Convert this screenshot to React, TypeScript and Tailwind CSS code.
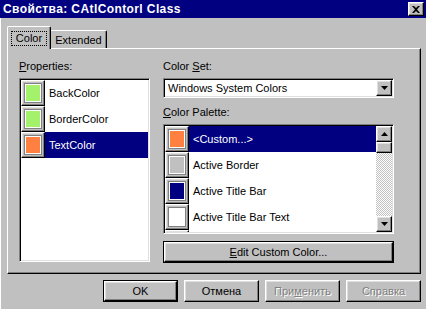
// Win95-style property page: "Свойства: CAtlContorl Class"

const raised = 'border border-t-white border-l-white border-r-black border-b-black shadow-[inset_-1px_-1px_#808080,inset_1px_1px_#dfdfdf]'
const sunken = 'border border-t-[#808080] border-l-[#808080] border-r-white border-b-white shadow-[inset_1px_1px_#000,inset_-1px_-1px_#dfdfdf]'
const disabledText = 'text-[#808080] [text-shadow:1px_1px_0_#fff]'

interface Item { name: string; color: string }

const props: Item[] = [
  { name: 'BackColor', color: '#a4f26c' },
  { name: 'BorderColor', color: '#a4f26c' },
  { name: 'TextColor', color: '#ff8040' },
]

const palette: Item[] = [
  { name: '<Custom...>', color: '#ff8040' },
  { name: 'Active Border', color: '#c0c0c0' },
  { name: 'Active Title Bar', color: '#000080' },
  { name: 'Active Title Bar Text', color: '#ffffff' },
  { name: 'Active Window Border', color: '#c0c0c0' },
]

function Arrow({ up = false }: { up?: boolean }) {
  return (
    <svg width="7" height="4" viewBox="0 0 7 4" className="block">
      <polygon points={up ? '3.5,0 7,4 0,4' : '0,0 7,0 3.5,4'} fill="#000" />
    </svg>
  )
}

function Swatch({ color }: { color: string }) {
  return (
    <div className={`shrink-0 w-[24px] h-[26px] bg-[#c0c0c0] flex items-center justify-center ${raised}`}>
      <div className="w-[18px] h-[20px] border border-[#808080] bg-white p-[1px]">
        <div className="w-full h-full" style={{ backgroundColor: color }} />
      </div>
    </div>
  )
}

function Row({ item, selected }: { item: Item; selected?: boolean }) {
  return (
    <div className="flex h-[26px] shrink-0">
      <Swatch color={item.color} />
      <div className={`flex-1 flex items-center pl-[4px] whitespace-nowrap ${selected ? 'bg-[#000080] text-white' : ''}`}>{item.name}</div>
    </div>
  )
}

function Btn({ children, def, disabled, className = '' }: { children: React.ReactNode; def?: boolean; disabled?: boolean; className?: string }) {
  const inner = (
    <div className={`w-full h-full bg-[#c0c0c0] flex items-center justify-center whitespace-nowrap ${raised} ${disabled ? disabledText : ''}`}>{children}</div>
  )
  return def ? (
    <div className={`border border-black ${className}`}>{inner}</div>
  ) : (
    <div className={className}>{inner}</div>
  )
}

export default function App() {
  return (
    <div className="w-[426px] h-[309px] bg-[#c0c0c0] flex flex-col overflow-hidden text-[11px] leading-[13px] text-black font-['Liberation_Sans',Arial,sans-serif]">
      {/* Title bar */}
      <div className="shrink-0 h-[18px] bg-[#000080] flex items-center pl-[3px] pr-[2px]">
        <span className="flex-1 text-white font-bold text-[12px] tracking-[0.4px] whitespace-nowrap">Свойства: CAtlContorl Class</span>
        <div className={`w-[16px] h-[14px] bg-[#c0c0c0] flex items-center justify-center ${raised}`}>
          <svg width="8" height="7" viewBox="0 0 8 7">
            <path d="M0 0h2l2 2 2-2h2L5 3.5 8 7H6L4 5 2 7H0l3-3.5z" fill="#000" />
          </svg>
        </div>
      </div>

      {/* Body */}
      <div className="flex-1 flex flex-col border-l border-l-white pl-[6px] pr-[5px] pt-[8px]">
        {/* Tabs */}
        <div className="flex items-end h-[22px] shrink-0">
          <div className="relative z-10 w-[44px] h-[23px] mb-[-1px] bg-[#c0c0c0] border-t border-l border-t-white border-l-white border-r border-r-black shadow-[inset_-1px_0_#808080] rounded-t-[2px] flex items-start justify-center pt-[4px]">
            <span className="border border-dotted border-black px-[4px] h-[15px] flex items-center">Color</span>
          </div>
          <div className="w-[56px] h-[18px] bg-[#c0c0c0] border-t border-t-white border-r border-r-black shadow-[inset_-1px_0_#808080] rounded-tr-[2px] flex items-center justify-center pt-[1px]">Extended</div>
        </div>

        {/* Panel */}
        <div className="h-[226px] shrink-0 flex pl-[11px] pt-[11px] bg-[#c0c0c0] border border-t-white border-l-white border-r-black border-b-black shadow-[inset_-1px_-1px_#808080]">
          <div className="w-[131px] flex flex-col">
            <div className="h-[13px] first-letter:underline">Properties:</div>
            <div className={`mt-[5px] h-[184px] bg-white flex flex-col p-[1px] ${sunken}`}>
              {props.map((p, i) => (
                <Row key={p.name} item={p} selected={i === 2} />
              ))}
            </div>
          </div>

          <div className="w-[231px] ml-[13px] flex flex-col">
            <div className="h-[13px]">Color <u>S</u>et:</div>
            <div className={`mt-[5px] h-[20px] bg-white flex items-center p-[1px] ${sunken}`}>
              <span className="flex-1 pl-[3px] whitespace-nowrap">Windows System Colors</span>
              <div className={`w-[16px] h-[16px] bg-[#c0c0c0] flex items-center justify-center ${raised}`}>
                <Arrow />
              </div>
            </div>

            <div className="mt-[8px] h-[13px] first-letter:underline">Color Palette:</div>
            <div className={`mt-[5px] h-[110px] bg-white flex p-[1px] ${sunken}`}>
              <div className="flex-1 flex flex-col overflow-hidden">
                {palette.map((p, i) => (
                  <Row key={p.name} item={p} selected={i === 0} />
                ))}
              </div>
              <div className="w-[16px] flex flex-col">
                <div className={`h-[16px] bg-[#c0c0c0] flex items-center justify-center shrink-0 ${raised}`}>
                  <Arrow up />
                </div>
                <div className={`h-[11px] bg-[#c0c0c0] shrink-0 ${raised}`} />
                <div className="flex-1 [background:repeating-conic-gradient(#c0c0c0_0%_25%,#ffffff_0%_50%)_0_0/2px_2px]" />
                <div className={`h-[16px] bg-[#c0c0c0] flex items-center justify-center shrink-0 ${raised}`}>
                  <Arrow />
                </div>
              </div>
            </div>

            <Btn def className="mt-[7px] h-[22px]"><span className="block first-letter:underline">Edit Custom Color...</span></Btn>
          </div>
        </div>

        {/* Dialog buttons */}
        <div className="mt-[6px] flex justify-end gap-[6px]">
          <Btn def className="w-[75px] h-[22px]">OK</Btn>
          <Btn className="w-[75px] h-[22px]">Отмена</Btn>
          <Btn disabled className="w-[75px] h-[22px]"><span>При<u>м</u>енить</span></Btn>
          <Btn disabled className="w-[75px] h-[22px]">Справка</Btn>
        </div>
      </div>
    </div>
  )
}
